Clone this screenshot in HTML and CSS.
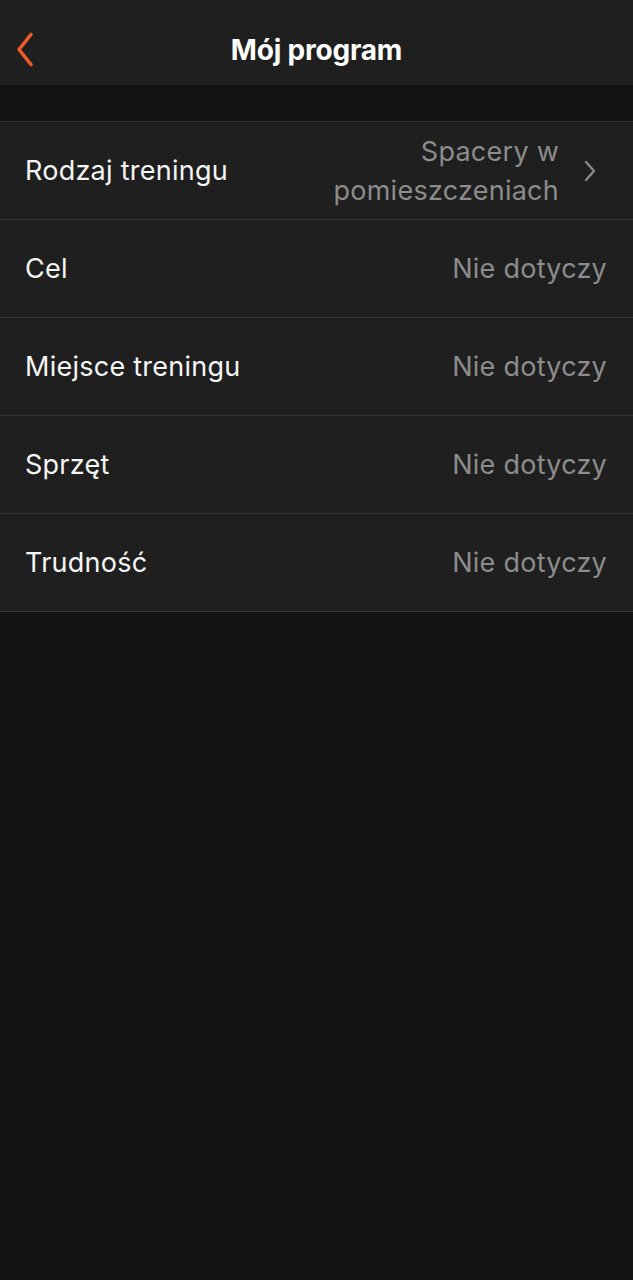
FILE: index.html
```html
<!DOCTYPE html>
<html lang="pl">
<head>
<meta charset="utf-8">
<link rel="stylesheet" href="styles.css">
</head>
<body>
<header class="nav">
  <button class="back" aria-label="Wstecz">
    <svg width="20" height="38" viewBox="0 0 20 38"><path d="M15 3.5 L3 18.5 L15 33.5" fill="none" stroke="#f05a28" stroke-width="3.6" stroke-linecap="round" stroke-linejoin="round"/></svg>
  </button>
  <h1 class="title">Mój program</h1>
</header>
<div class="spacer"></div>
<ul class="list">
  <li class="row">
    <span class="label">Rodzaj treningu</span>
    <span class="value-wrap">
      <span class="value multi">Spacery w<br>pomieszczeniach</span>
      <svg class="chev" width="14" height="24" viewBox="0 0 14 24"><path d="M3 3 L11 12 L3 21" fill="none" stroke="#8a8a8a" stroke-width="2.4" stroke-linecap="round" stroke-linejoin="round"/></svg>
    </span>
  </li>
  <li class="row"><span class="label">Cel</span><span class="value">Nie dotyczy</span></li>
  <li class="row"><span class="label">Miejsce treningu</span><span class="value">Nie dotyczy</span></li>
  <li class="row"><span class="label">Sprzęt</span><span class="value">Nie dotyczy</span></li>
  <li class="row"><span class="label">Trudność</span><span class="value">Nie dotyczy</span></li>
</ul>
</body>
</html>
```
FILE: styles.css
```css
* { box-sizing: border-box; }
html, body { margin: 0; padding: 0; }
body {
  background: #131313;
  font-family: "Inter", "Roboto", "Liberation Sans", sans-serif;
  color: #fff;
  width: 633px;
  min-height: 1280px;
}
.nav {
  height: 85px;
  background: #1f1f1f;
  display: flex;
  align-items: center;
  justify-content: center;
  position: relative;
}
.back {
  position: absolute;
  left: 16px;
  top: 31px;
  background: none;
  border: 0;
  padding: 0;
  display: flex;
}
.title {
  margin: 0;
  font-size: 28px;
  font-weight: 700;
  letter-spacing: -0.2px;
  padding-top: 14px;
}
.spacer { height: 36px; }
.list {
  list-style: none;
  margin: 0;
  padding: 0;
  background: #1f1f1f;
  border-bottom: 1px solid #333333;
}
.row {
  height: 98px;
  border-top: 1px solid #333333;
  display: flex;
  align-items: center;
  justify-content: space-between;
  padding: 0 26px 0 25px;
}
.label {
  font-size: 27px;
  letter-spacing: 0.25px;
  color: #f5f5f5;
}
.value {
  font-size: 27px;
  letter-spacing: 0.25px;
  color: #8c8c8c;
  text-align: right;
}
.value.multi { line-height: 39px; }
.value-wrap {
  display: flex;
  align-items: center;
  gap: 24px;
  margin-right: 10px;
}
.chev { display: block; }
```
